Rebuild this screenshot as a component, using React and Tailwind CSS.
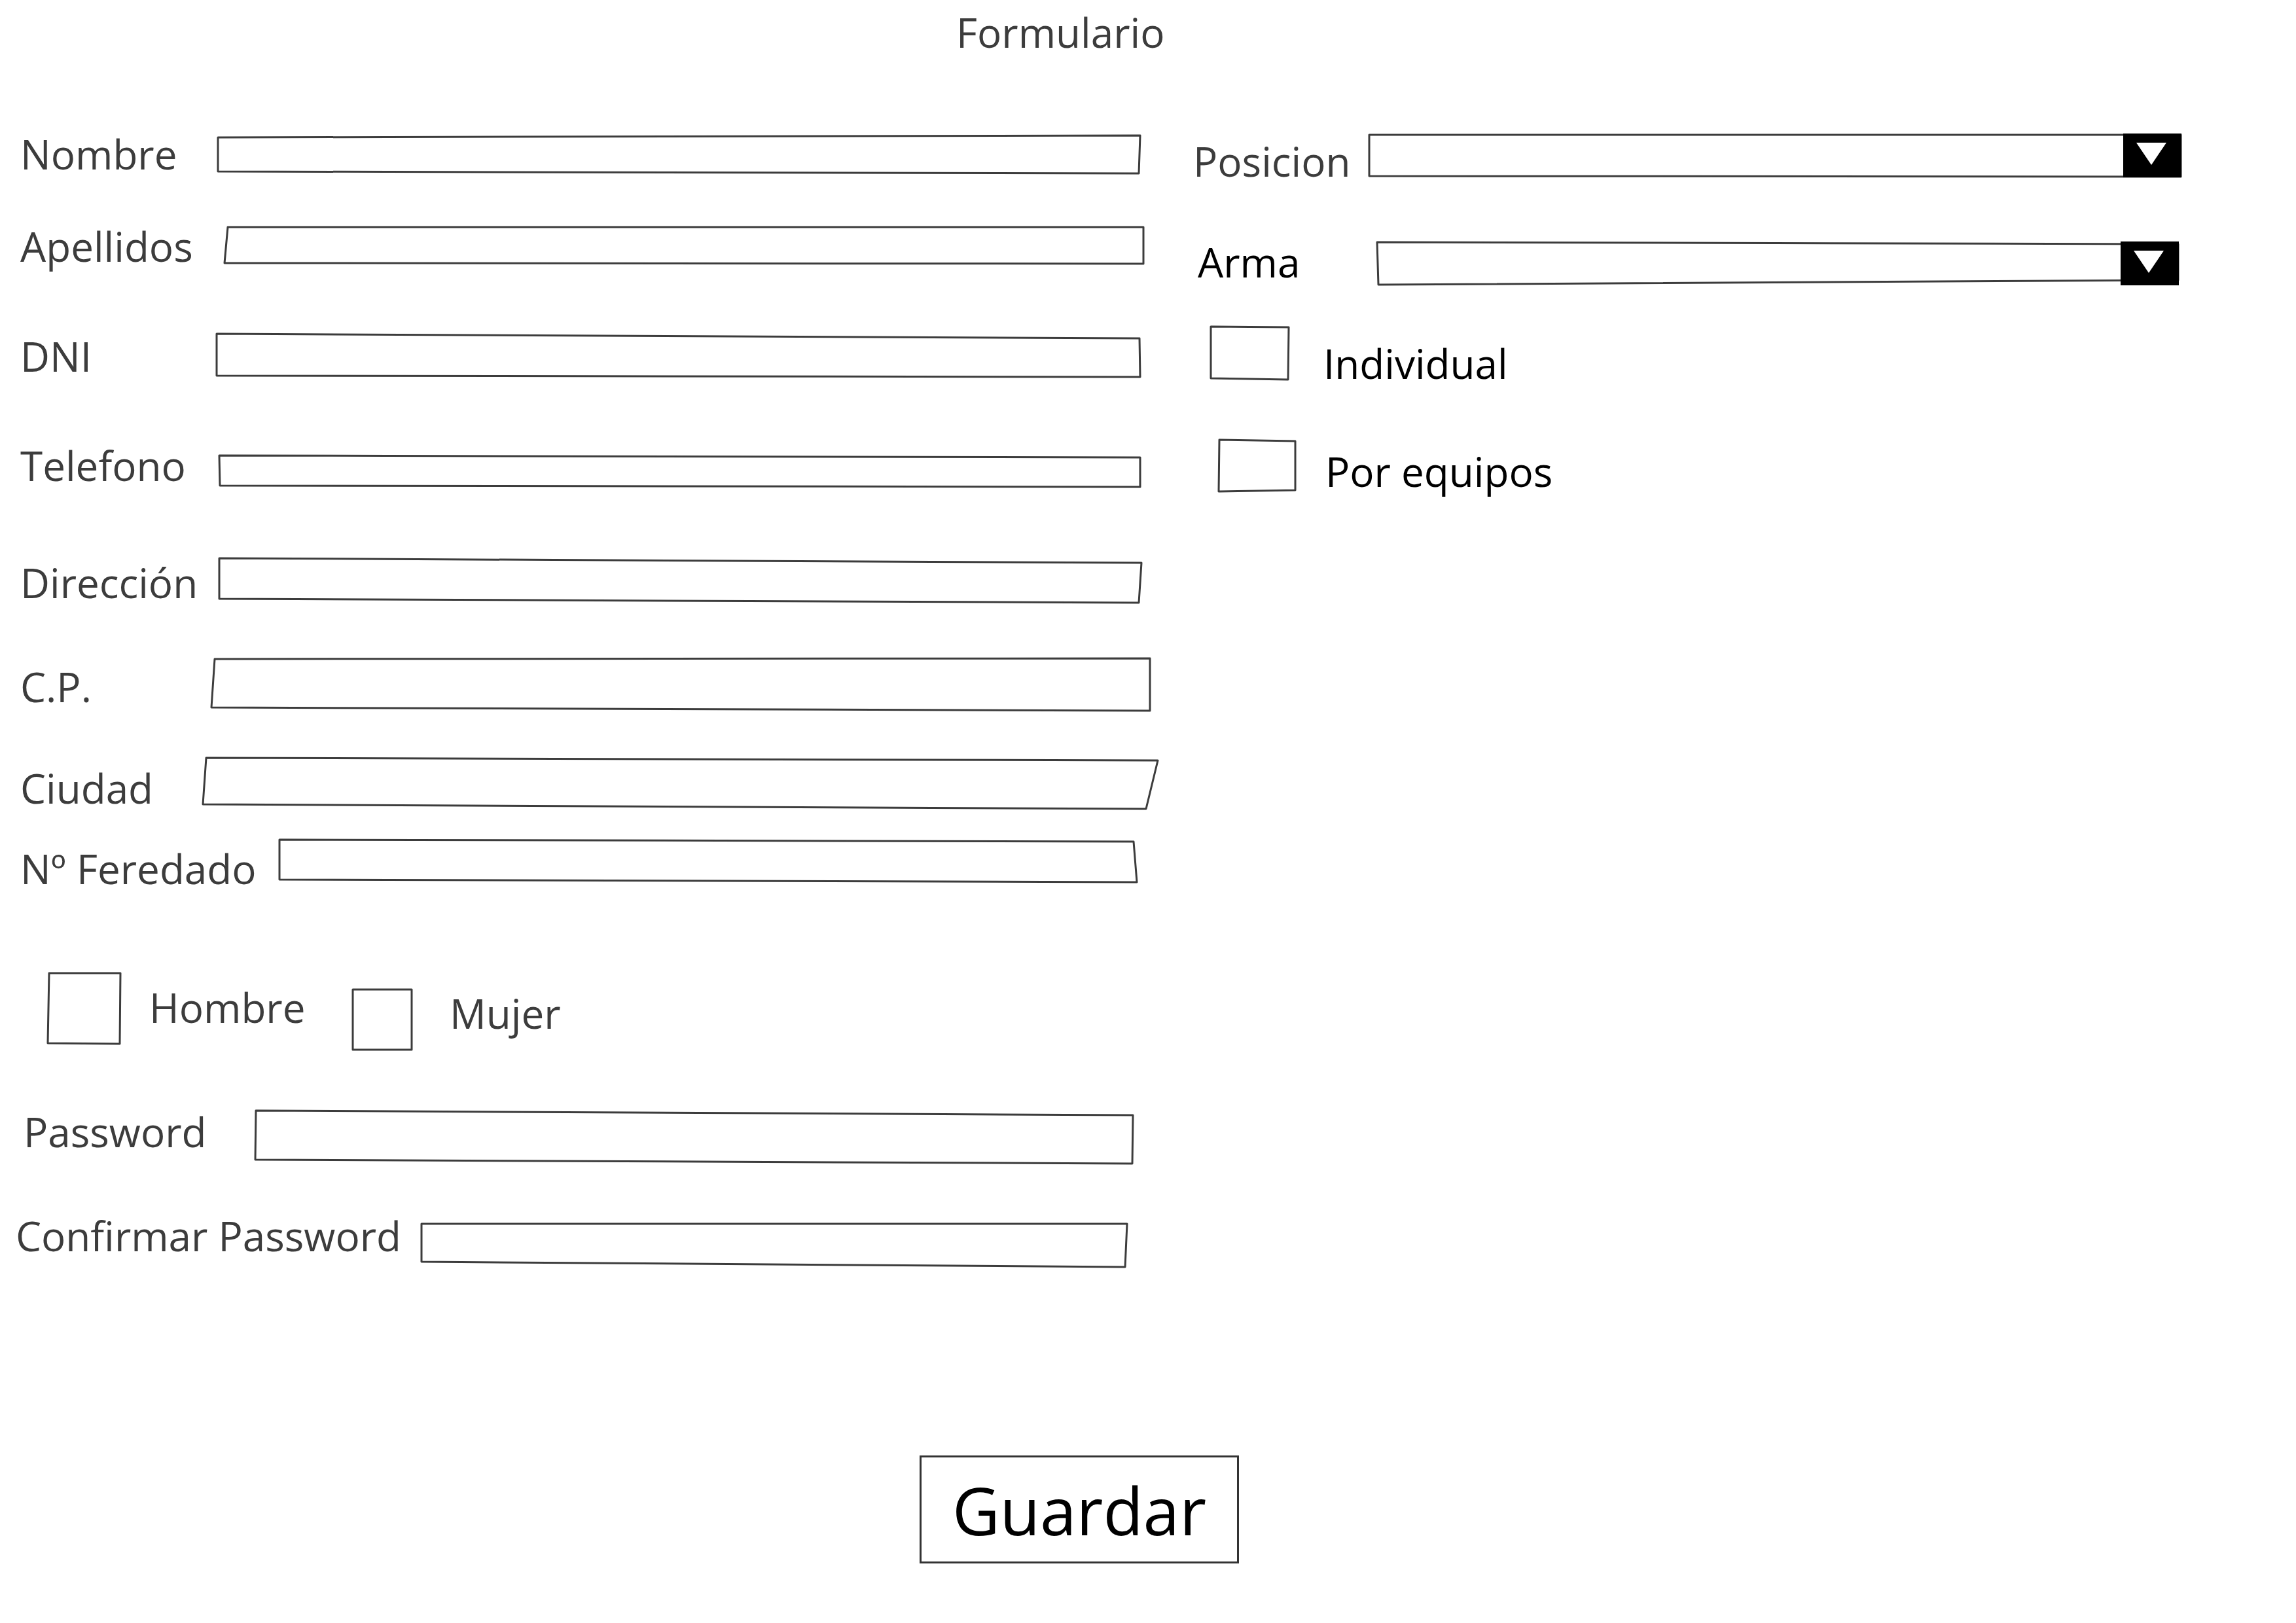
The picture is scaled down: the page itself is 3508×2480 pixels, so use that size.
import React from "react";

const STROKE = "#3c3c3c";

function Sketch({ w, h, pts, sw = 3 }) {
  const p = pts || [
    [2, 2],
    [w - 2, 2],
    [w - 2, h - 2],
    [2, h - 2],
  ];
  return (
    <svg width={w} height={h} className="block shrink-0 overflow-visible">
      <polygon
        points={p.map((q) => q.join(",")).join(" ")}
        fill="none"
        stroke={STROKE}
        strokeWidth={sw}
        strokeLinejoin="round"
      />
    </svg>
  );
}

function Select({ w, h, pts }) {
  const bx = w - 89;
  return (
    <svg width={w} height={h} className="block shrink-0 overflow-visible">
      <polygon
        points={pts.map((q) => q.join(",")).join(" ")}
        fill="none"
        stroke={STROKE}
        strokeWidth={3}
        strokeLinejoin="round"
      />
      <rect x={bx} y={0} width={89} height={h} fill="#000" />
      <polygon
        points={`${bx + 20},${14} ${bx + 66},${14} ${bx + 43},${48}`}
        fill="#fff"
      />
    </svg>
  );
}

function Field({ rowClass, labelClass, label, w, h, pts }) {
  return (
    <div className={`flex items-start shrink-0 ${rowClass}`}>
      <div className={`shrink-0 text-[62px] leading-[84px] text-[#3c3c3c] whitespace-nowrap ${labelClass}`}>
        {label}
      </div>
      <Sketch w={w} h={h} pts={pts} />
    </div>
  );
}

export default function App() {
  return (
    <div className="w-[3508px] h-[2480px] bg-white overflow-hidden font-['Open_Sans',sans-serif]">
      <div className="pt-[7px] pl-[1461px] h-[91px] text-[62px] leading-[84px] text-[#3c3c3c]">
        Formulario
      </div>

      <div className="flex h-[1846px]">
        {/* left column */}
        <div className="w-[1800px] shrink-0 pl-[31px] flex flex-col">
          <Field
            rowClass="mt-[115px] h-[60px]"
            labelClass="w-[300px] -mt-[13px]"
            label="Nombre"
            w={1412}
            h={60}
            pts={[[2, 4], [1411, 1], [1409, 59], [2, 56]]}
          />
          <Field
            rowClass="mt-[79px] h-[60px]"
            labelClass="w-[311px] -mt-[11px]"
            label="Apellidos"
            w={1407}
            h={60}
            pts={[[6, 2], [1405, 2], [1405, 58], [1, 57]]}
          />
          <Field
            rowClass="mt-[103px] h-[69px]"
            labelClass="w-[298px] -mt-[6px]"
            label="DNI"
            w={1414}
            h={69}
            pts={[[2, 2], [1412, 9], [1413, 68], [2, 66]]}
          />
          <Field
            rowClass="mt-[117px] h-[51px]"
            labelClass="w-[302px] -mt-[25px]"
            label="Telefono"
            w={1410}
            h={51}
            pts={[[2, 2], [1409, 5], [1409, 50], [3, 48]]}
          />
          <Field
            rowClass="mt-[107px] h-[70px]"
            labelClass="w-[302px] -mt-[4px]"
            label="Dirección"
            w={1412}
            h={70}
            pts={[[2, 1], [1411, 8], [1407, 69], [2, 63]]}
          />
          <Field
            rowClass="mt-[83px] h-[82px]"
            labelClass="w-[291px] mt-[2px]"
            label="C.P."
            w={1436}
            h={82}
            pts={[[6, 2], [1435, 1], [1435, 81], [1, 76]]}
          />
          <Field
            rowClass="mt-[70px] h-[80px]"
            labelClass="w-[278px] mt-[5px]"
            label="Ciudad"
            w={1461}
            h={80}
            pts={[[6, 1], [1460, 5], [1442, 79], [1, 72]]}
          />
          <Field
            rowClass="mt-[45px] h-[67px]"
            labelClass="w-[394px] mt-[3px]"
            label="Nº Feredado"
            w={1313}
            h={67}
            pts={[[2, 1], [1307, 4], [1312, 66], [2, 62]]}
          />

          {/* gender checkboxes */}
          <div className="flex items-start shrink-0 mt-[136px] h-[121px]">
            <div className="ml-[41px]">
              <Sketch w={114} h={112} pts={[[3, 2], [112, 2], [111, 110], [1, 109]]} />
            </div>
            <div className="ml-[42px] mt-[12px] w-[309px] shrink-0 text-[62px] leading-[84px] text-[#3c3c3c]">
              Hombre
            </div>
            <div className="mt-[25px]">
              <Sketch w={94} h={96} pts={[[2, 2], [92, 2], [92, 94], [2, 94]]} />
            </div>
            <div className="ml-[56px] mt-[21px] text-[62px] leading-[84px] text-[#3c3c3c]">
              Mujer
            </div>
          </div>

          <Field
            rowClass="mt-[90px] h-[83px]"
            labelClass="ml-[5px] w-[353px] -mt-[9px]"
            label="Password"
            w={1343}
            h={83}
            pts={[[2, 1], [1342, 8], [1341, 82], [1, 76]]}
          />
          <Field
            rowClass="mt-[89px] h-[69px]"
            labelClass="-ml-[7px] w-[618px] -mt-[22px]"
            label="Confirmar Password"
            w={1081}
            h={69}
            pts={[[2, 2], [1080, 2], [1077, 68], [2, 60]]}
          />
        </div>

        {/* right column */}
        <div className="flex-1 pl-[23px] flex flex-col">
          <div className="flex items-start shrink-0 h-[67px] mt-[113px]">
            <div className="w-[267px] shrink-0 text-[62px] leading-[84px] text-[#3c3c3c]">
              Posicion
            </div>
            <Select w={1243} h={67} pts={[[2, 2], [1242, 2], [1242, 66], [2, 65]]} />
          </div>
          <div className="flex items-start shrink-0 h-[67px] mt-[98px]">
            <div className="ml-[7px] w-[273px] -mt-[11px] shrink-0 text-[62px] leading-[84px] text-black">
              Arma
            </div>
            <Select w={1226} h={67} pts={[[1, 1], [1225, 4], [1225, 59], [3, 66]]} />
          </div>
          <div className="flex items-start shrink-0 h-[85px] mt-[61px]">
            <div className="ml-[25px]">
              <Sketch w={123} h={85} pts={[[2, 2], [121, 3], [120, 83], [2, 81]]} />
            </div>
            <div className="ml-[51px] mt-[16px] text-[62px] leading-[84px] text-black">
              Individual
            </div>
          </div>
          <div className="flex items-start shrink-0 h-[81px] mt-[89px]">
            <div className="ml-[38px]">
              <Sketch w={119} h={81} pts={[[2, 1], [118, 3], [118, 78], [1, 80]]} />
            </div>
            <div className="ml-[45px] mt-[7px] text-[62px] leading-[84px] text-black">
              Por equipos
            </div>
          </div>
        </div>
      </div>

      <div className="mt-[287px] ml-[1405px] w-[488px] h-[165px] border-[3px] border-[#333] flex items-center justify-center">
        <span className="text-[100px] leading-none text-black">Guardar</span>
      </div>
    </div>
  );
}
